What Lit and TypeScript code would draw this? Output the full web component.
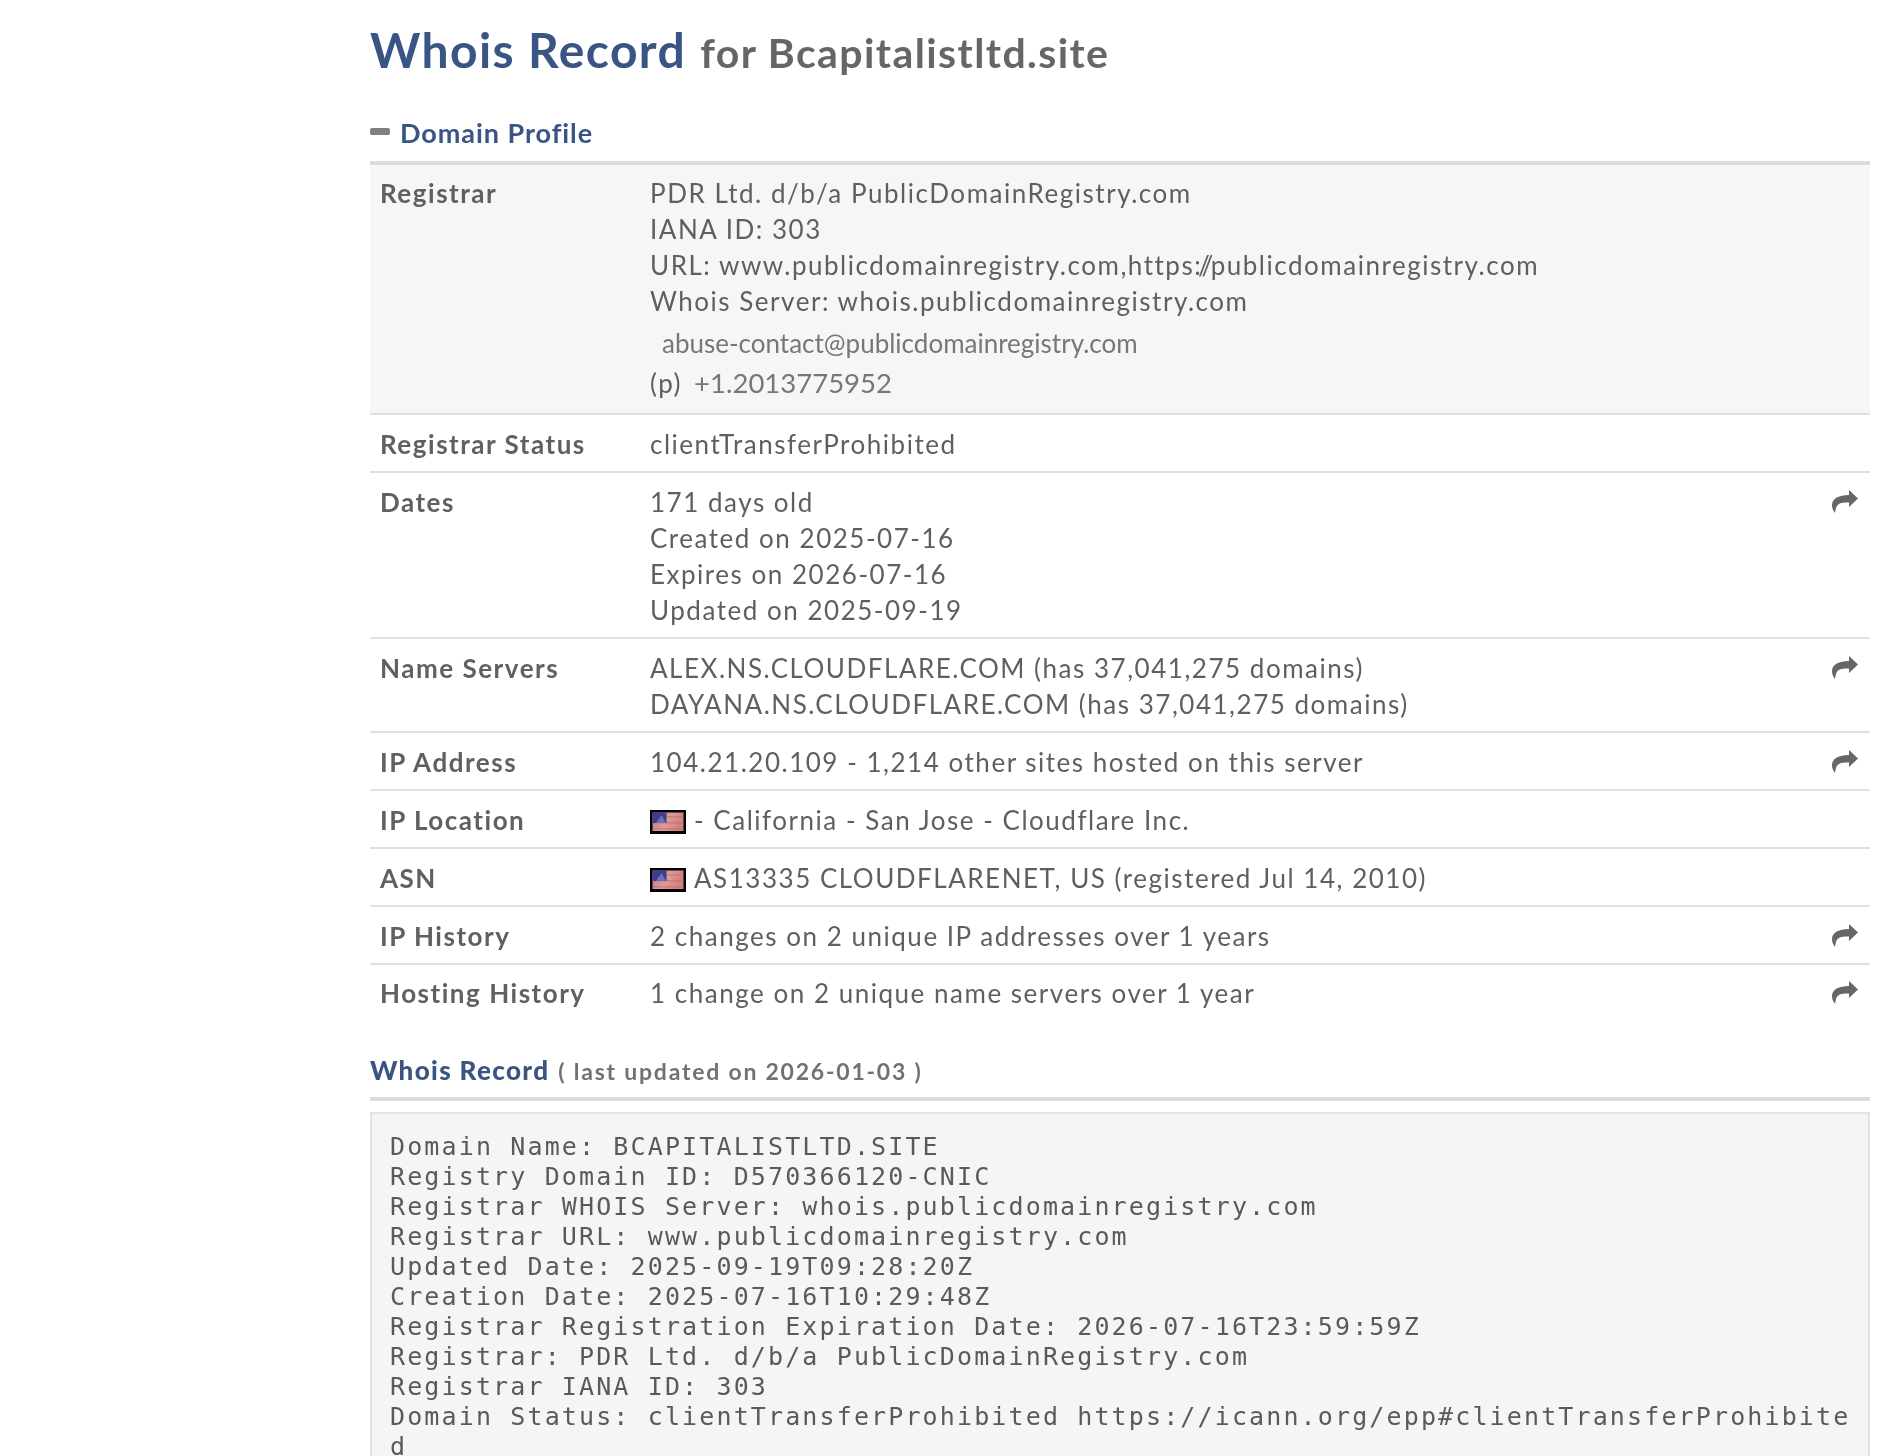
import { LitElement, html, css, svg } from "lit";
import { customElement } from "lit/decorators.js";

const flag = html`<svg class="flag" viewBox="0 0 36 24" aria-hidden="true">
  <defs>
    <linearGradient id="fg" x1="0" y1="0" x2="1" y2="0.3">
      <stop offset="0" stop-color="#c07f80"/>
      <stop offset="0.55" stop-color="#e09a98"/>
      <stop offset="1" stop-color="#cf8280"/>
    </linearGradient>
  </defs>
  <rect width="36" height="24" fill="#000"/>
  <rect x="2.5" y="2.5" width="31" height="18.5" fill="url(#fg)"/>
  ${[0, 1, 2].map((i) => svg`<rect x="2.5" y="${6 + i * 6}" width="31" height="1.6" fill="#bd6c6a" opacity="0.5"/>`)}
  <rect x="2.5" y="2.5" width="14" height="10.5" fill="#3c3c92"/>
  <path d="M6 13 L11.5 5 L16 13Z" fill="#6f6fb2"/>
</svg>`;

const arrow = html`<svg class="arrow" viewBox="0 0 26 23" aria-hidden="true">
  <path d="M17 0 L26 8.5 L17 17 L17 12.5 C11 12 6.5 13 4.8 16 C3.8 18 3.5 20 3 23 C1 20.5 0 18 0 15 C0 8.5 7 5 17 5 Z" fill="#666"/>
</svg>`;

const whois = `Domain Name: BCAPITALISTLTD.SITE
Registry Domain ID: D570366120-CNIC
Registrar WHOIS Server: whois.publicdomainregistry.com
Registrar URL: www.publicdomainregistry.com
Updated Date: 2025-09-19T09:28:20Z
Creation Date: 2025-07-16T10:29:48Z
Registrar Registration Expiration Date: 2026-07-16T23:59:59Z
Registrar: PDR Ltd. d/b/a PublicDomainRegistry.com
Registrar IANA ID: 303
Domain Status: clientTransferProhibited https://icann.org/epp#clientTransferProhibited`;

@customElement("app-root")
export class AppRoot extends LitElement {
  static styles = css`
    :host {
      display: block;
      height: 1456px;
      overflow: hidden;
      background: #fff;
      font-family: Lato, "Liberation Sans", sans-serif;
      color: #5f5f5f;
    }
    .page { padding: 18px 32px 0 370px; filter: blur(0.4px); }
    h1 { margin: 0; height: 64px; display: flex; align-items: baseline; gap: 14px; font-weight: 700; }
    .t1 { font-size: 48px; line-height: 64px; color: #3a5583; letter-spacing: 1.4px; }
    .t2 { font-size: 41px; line-height: 64px; color: #666; letter-spacing: 1.4px; }
    .section { display: flex; align-items: center; gap: 10px; margin-top: 33px; height: 34px; font-size: 27px; font-weight: 700; color: #3a5583; letter-spacing: 0.95px; }
    .minus { width: 20px; height: 7px; border-radius: 2px; background: #808080; margin-top: -1px; }
    .table { margin-top: 12px; border-top: 4px solid #dcdcdc; }
    .row { display: grid; grid-template-columns: 270px 1fr 48px; padding: 11px 0 9px 10px; border-bottom: 2px solid #dfdfdf; font-size: 26px; line-height: 36px; letter-spacing: 1.52px; }
    .row:last-child { border-bottom: 0; padding-top: 10px; }
    .row.shade { background: #f6f6f6; padding-top: 10px; padding-bottom: 12px; }
    .label { font-weight: 700; color: #606060; }
    .line { display: block; white-space: nowrap; }
    .tight { letter-spacing: -2.6px; }
    .blur { filter: blur(0.7px); letter-spacing: 0; color: #777; }
    .mail { margin: 6px 0 0 12px; }
    .phoneline { margin-top: 4px; }
    .phone { display: inline-block; margin-left: 12px; font-size: 27.5px; }
    .flag { width: 36px; height: 24px; margin-right: 8px; vertical-align: -4px; filter: blur(0.7px); }
    .act { display: flex; justify-content: center; padding-right: 2px; }
    .arrow { width: 26px; height: 23px; margin-top: 6px; }
    .rec { margin-top: 34px; height: 34px; display: flex; align-items: baseline; gap: 9px; font-weight: 700; }
    .rec b { font-size: 26px; color: #3a5583; letter-spacing: 1.35px; }
    .rec span { font-size: 23px; color: #727272; letter-spacing: 1.77px; }
    .rule { margin-top: 9px; height: 4px; background: #dcdcdc; }
    pre {
      margin: 11px 0 0;
      padding: 18px 12px 40px 18px;
      background: #f5f5f5;
      border: 2px solid #e4e4e4;
      font-family: "DejaVu Sans Mono", monospace;
      font-size: 25px;
      line-height: 30px;
      letter-spacing: 2.13px;
      color: #5a5a5a;
      white-space: pre-wrap;
      word-break: break-all;
    }
  `;

  private row(label: string, body: unknown, action = false, shade = false) {
    return html`<div class="row ${shade ? "shade" : ""}">
      <div class="label">${label}</div>
      <div>${body}</div>
      <div class="act">${action ? arrow : ""}</div>
    </div>`;
  }

  render() {
    return html`<div class="page">
      <h1><span class="t1">Whois Record</span><span class="t2">for Bcapitalistltd.site</span></h1>
      <div class="section"><span class="minus"></span>Domain Profile</div>
      <div class="table">
        ${this.row("Registrar", html`
          <span class="line">PDR Ltd. d/b/a PublicDomainRegistry.com</span>
          <span class="line">IANA ID: 303</span>
          <span class="line">URL: www.publicdomainregistry.com,https<span class="tight">://</span>publicdomainregistry.com</span>
          <span class="line">Whois Server: whois.publicdomainregistry.com</span>
          <span class="line blur mail">abuse-contact@publicdomainregistry.com</span>
          <span class="line phoneline">(p)<span class="blur phone">+1.2013775952</span></span>`, false, true)}
        ${this.row("Registrar Status", "clientTransferProhibited")}
        ${this.row("Dates", html`
          <span class="line">171 days old</span>
          <span class="line">Created on 2025-07-16</span>
          <span class="line">Expires on 2026-07-16</span>
          <span class="line">Updated on 2025-09-19</span>`, true)}
        ${this.row("Name Servers", html`
          <span class="line">ALEX.NS.CLOUDFLARE.COM (has 37,041,275 domains)</span>
          <span class="line">DAYANA.NS.CLOUDFLARE.COM (has 37,041,275 domains)</span>`, true)}
        ${this.row("IP Address", "104.21.20.109 - 1,214 other sites hosted on this server", true)}
        ${this.row("IP Location", html`${flag}- California - San Jose - Cloudflare Inc.`)}
        ${this.row("ASN", html`${flag}AS13335 CLOUDFLARENET, US (registered Jul 14, 2010)`)}
        ${this.row("IP History", "2 changes on 2 unique IP addresses over 1 years", true)}
        ${this.row("Hosting History", "1 change on 2 unique name servers over 1 year", true)}
      </div>
      <div class="rec"><b>Whois Record</b><span>( last updated on 2026-01-03 )</span></div>
      <div class="rule"></div>
      <pre>${whois}</pre>
    </div>`;
  }
}
